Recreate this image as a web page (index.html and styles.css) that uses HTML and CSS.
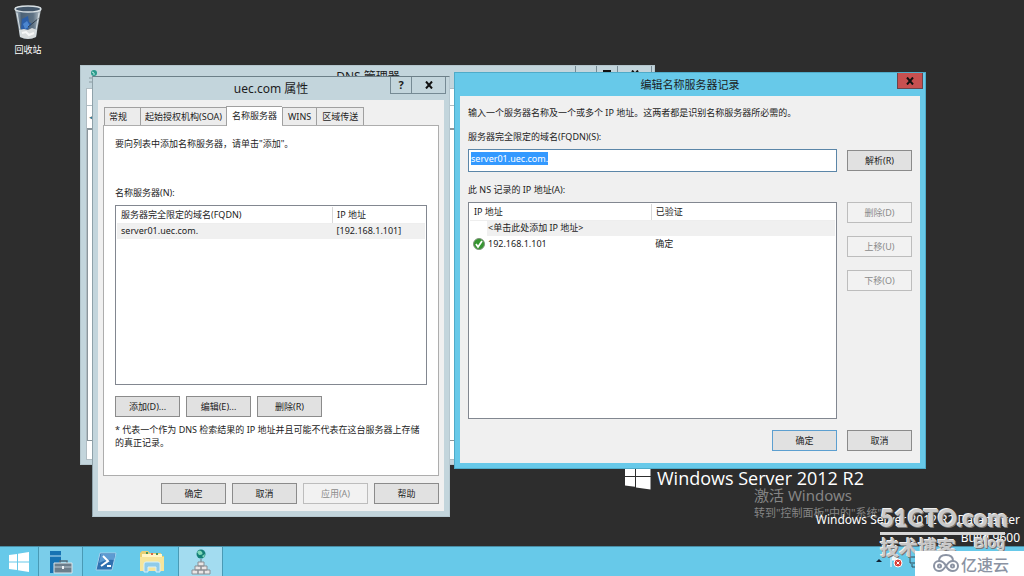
FILE: index.html
```html
<!DOCTYPE html>
<html lang="zh-CN">
<head>
<meta charset="utf-8">
<title>编辑名称服务器记录</title>
<link rel="stylesheet" href="styles.css">
</head>
<body>
<main class="desktop">
  <div class="desktop-icon">
    <svg width="30" height="36" viewBox="0 0 30 36" aria-hidden="true">
      <defs><linearGradient id="bin" x1="0" x2="1"><stop offset="0" stop-color="#b9c4ca"/><stop offset=".25" stop-color="#4c6277"/><stop offset=".7" stop-color="#5f7385"/><stop offset="1" stop-color="#c3ccd1"/></linearGradient></defs>
      <path d="M2 4L7 32Q15 36 23 32L28 4Z" fill="url(#bin)"/>
      <path d="M9 14l6-3 1 6 3 2-5 6-6-1z" fill="#2c5fa8"/><path d="M10 19l4-3 3 5-5 3z" fill="#4c86cf"/>
      <path d="M15 22L26 13" stroke="#33414e" stroke-width="1"/>
      <path d="M6 25l5-1 4 1 4-2 5 2-1 7q-8 4-16 0z" fill="#d9dcdd"/><path d="M9 28l4-1 3 3 5-2" stroke="#f7f7f7" stroke-width="2" fill="none"/>
      <ellipse cx="15" cy="4" rx="13" ry="3" fill="#44576a" stroke="#d8e0e4" stroke-width="1.5"/>
      <path d="M4 8l4 23M26 8l-4 23" stroke="#d8e0e4" stroke-width="1"/>
    </svg>
    <span>回收站</span>
  </div>

  <div class="brand">
    <svg width="26" height="26" viewBox="0 0 26 26" aria-hidden="true"><path d="M0 3.500L10 2.200V12H0ZM11 2L25.500 0V12H11ZM0 13H10V22.800L0 21.500ZM11 13H25.500V25.500L11 23.500Z" fill="#fff"/></svg>
    <span>Windows Server 2012 R2</span>
  </div>
  <div class="activate"><p class="activate-title">激活 Windows</p><p>转到"控制面板"中的"系统"</p></div>
  <div class="build"><p>Windows Server 2012 R2 Datacenter</p><p>Build 9600</p></div>

  <section class="window manager">
    <header class="manager-title">
      <svg width="14" height="14" viewBox="0 0 14 14" aria-hidden="true"><circle cx="7" cy="4" r="3" fill="#2a9a8c"/><path d="M5 3l2 1v2" stroke="#b9efe3" fill="none"/><path d="M2 9h10M7 7v5M2 13h10" stroke="#8a9aa0"/></svg>
      <h2>DNS 管理器</h2>
      <div class="caption-buttons"><button aria-label="最小化"></button><button aria-label="最大化"><svg width="8" height="8" viewBox="0 0 8 8"><path d="M1 1H7V7H1Z" fill="none" stroke="#111" stroke-width="2"/></svg></button><button class="wide" aria-label="关闭"><svg width="8" height="8" viewBox="0 0 8 8"><path d="M1 .5L7 7.500M7 .5L1 7.500" stroke="#111" stroke-width="2"/></svg></button></div>
    </header>
    <div class="manager-body">
      <div class="manager-menu"></div><div class="manager-tools"><span>◂</span></div>
      <div class="manager-view"><span>.]</span></div><div class="manager-status"></div>
    </div>
  </section>

  <section class="window properties">
    <header class="title"><h2>uec.com 属性</h2>
      <div class="caption-buttons"><button aria-label="帮助">?</button><button class="wide" aria-label="关闭"><svg width="8" height="8" viewBox="0 0 8 8"><path d="M1 .5L7 7.500M7 .5L1 7.500" stroke="#111" stroke-width="2"/></svg></button></div>
    </header>
    <div class="client">
      <div class="tabs" role="tablist">
        <button class="tab general" role="tab">常规</button><button class="tab" role="tab">起始授权机构(SOA)</button><button class="tab active" role="tab" aria-selected="true">名称服务器</button><button class="tab" role="tab">WINS</button><button class="tab" role="tab">区域传送</button>
      </div>
      <div class="panel">
        <p class="hint">要向列表中添加名称服务器，请单击"添加"。</p>
        <p id="servers-label">名称服务器(N):</p>
        <div class="list servers">
          <table aria-labelledby="servers-label">
            <thead><tr><th class="name">服务器完全限定的域名(FQDN)</th><th>IP 地址</th></tr></thead>
            <tbody><tr class="shade"><td>server01.uec.com.</td><td>[192.168.1.101]</td></tr></tbody>
          </table>
        </div>
        <div class="buttons"><button class="btn">添加(D)...</button><button class="btn">编辑(E)...</button><button class="btn">删除(R)</button></div>
        <p class="note">* 代表一个作为 DNS 检索结果的 IP 地址并且可能不代表在这台服务器上存储的真正记录。</p>
      </div>
      <div class="buttons end"><button class="btn">确定</button><button class="btn">取消</button><button class="btn" disabled>应用(A)</button><button class="btn">帮助</button></div>
    </div>
  </section>

  <section class="window edit">
    <header class="title"><h2>编辑名称服务器记录</h2>
      <button class="close" aria-label="关闭"><svg width="8" height="8" viewBox="0 0 8 8"><path d="M1 .5L7 7.500M7 .5L1 7.500" stroke="#111" stroke-width="2"/></svg></button>
    </header>
    <form class="client edit-form">
      <p class="intro">输入一个服务器名称及一个或多个 IP 地址。这两者都是识别名称服务器所必需的。</p>
      <label for="fqdn">服务器完全限定的域名(FQDN)(S):</label>
      <div class="form-row"><input id="fqdn" type="text" value="server01.uec.com." spellcheck="false"><button type="button" class="btn">解析(R)</button></div>
      <p class="ip-label" id="ip-label">此 NS 记录的 IP 地址(A):</p>
      <div class="form-row grow">
        <div class="list">
          <table aria-labelledby="ip-label">
            <colgroup><col class="state-col"><col class="ip-col"><col></colgroup>
            <thead><tr><th colspan="2">IP 地址</th><th>已验证</th></tr></thead>
            <tbody>
              <tr><td class="state"></td><td class="shade">&lt;单击此处添加 IP 地址&gt;</td><td class="shade"></td></tr>
              <tr><td class="state"><svg width="12" height="12" viewBox="0 0 12 12" role="img" aria-label="已验证"><circle cx="6" cy="6" r="5.500" fill="#35952f" stroke="#82947f"/><path d="M3 6l2 3 4-6" fill="none" stroke="#fff" stroke-width="1.800"/></svg></td><td>192.168.1.101</td><td>确定</td></tr>
            </tbody>
          </table>
        </div>
        <div class="side"><button type="button" class="btn" disabled>删除(D)</button><button type="button" class="btn" disabled>上移(U)</button><button type="button" class="btn" disabled>下移(O)</button></div>
      </div>
      <div class="buttons end"><button type="button" class="btn default">确定</button><button type="button" class="btn">取消</button></div>
    </form>
  </section>
</main>

<footer class="taskbar">
  <button class="task start" aria-label="开始"><svg width="20" height="20" viewBox="0 0 20 20"><path d="M0 3L8 2V9.500H0ZM9 1.800L20 0V9.500H9ZM0 10.500H8V18L0 17ZM9 10.500H20V20L9 18.200Z" fill="#fff"/></svg></button>
  <button class="task running" aria-label="服务器管理器"><svg width="24" height="24" viewBox="0 0 24 24"><path d="M1 1H12V23H1Z" fill="#1673b3"/><path d="M1 6H12" stroke="#b9e3f5"/><path d="M11 14V11H18V14" fill="none" stroke="#566b78" stroke-width="1.500"/><path d="M5 13H23V23H5Z" fill="#6c7e8b" stroke="#dce7ec"/><path d="M5 17H23" stroke="#b9c7d0"/><path d="M13 16h2v3h-2z" fill="#eef3f5"/></svg></button>
  <button class="task" aria-label="PowerShell"><svg width="22" height="19" viewBox="0 0 22 19"><path d="M5 1H21L17 18H1Z" fill="#2f70b0" stroke="#a4cfec"/><path d="M6 2H20L19 8Q11 7 4 11Z" fill="#5d9bd2"/><path d="M8 4L13 9L6 14M12 14H16" fill="none" stroke="#fff" stroke-width="2"/></svg></button>
  <button class="task" aria-label="文件资源管理器"><svg width="26" height="23" viewBox="0 0 26 23"><path d="M1 3L3 1H9L11 3H22V6H25V21H1Z" fill="#e8cf73"/><path d="M3 4H23V9H3Z" fill="#fff6c9"/><path d="M7 2h2v2H7zM17 3h2v2h-2z" fill="#46945b"/><path d="M12 3h2v2h-2z" fill="#d5664a"/><path d="M1 7H25V21H1Z" fill="#f6e59b"/><path d="M5 22V14Q5 12 7 12H19Q21 12 21 14V22H17V17H9V22Z" fill="#8fcbe9" stroke="#d7f0fa"/></svg></button>
  <button class="task current" aria-label="DNS 管理器"><svg width="20" height="26" viewBox="0 0 20 26"><circle cx="10" cy="5" r="4.500" fill="#147f76"/><path d="M6 3q3-3 5 0t-3 3zM11 7l3-2-1 4z" fill="#80d8b9"/><path d="M10 10v4" fill="none" stroke="#64777f"/><path d="M7 13h6v4H7zM4 17h6v4H4zM10 17h6v4h-6zM1 21h6v4H1zM7 21h6v4H7zM13 21h6v4h-6z" fill="#e9e5e5" stroke="#8b8e93"/></svg></button>
  <div class="tray"><svg width="42" height="16" viewBox="0 0 42 16" aria-hidden="true"><path d="M0 9l3-3 3 3z" fill="#123"/><path d="M15 2v12M16 3h5l1 4h-6" fill="#edf8fc" stroke="#fff"/><circle cx="22" cy="10" r="4" fill="#d83b32" stroke="#fff"/><path d="M20.500 8.500l3 3m0-3l-3 3" stroke="#fff"/><path d="M34 4h6v6h-6zM36 11v3h5" fill="none" stroke="#35515d"/></svg></div>
</footer>

<aside class="cto">
  <div class="cto-name">51CTO.com</div>
  <div class="cto-sub"><span>技术博客</span><span class="blog">Blog</span></div>
</aside>
<aside class="yisu"><svg width="26" height="19" viewBox="0 0 26 19" aria-hidden="true"><g fill="none" stroke="#8b93a3" stroke-width="2"><path d="M6 7C6 3 9 1 13 1S20 3 20 7"/><path d="M13 12C11 8 9 7 6 7a5 5 0 0 0 0 10c3 0 4-1 7-5s4-5 7-5a5 5 0 0 1 0 10c-3 0-5-1-7-5"/><circle cx="6.500" cy="12" r="1.500"/><circle cx="19.500" cy="12" r="1.500"/></g></svg><span>亿速云</span></aside>
<script src="script.js"></script>
</body>
</html>
```
FILE: styles.css
```css
* { box-sizing: border-box; }
body { margin: 0; height: 100vh; display: flex; flex-direction: column; overflow: hidden; position: relative; background: #2d2d2d; color: #1c1c1c; font: 9px/13px "Noto Sans", "Noto Sans CJK SC", sans-serif; }
p, h2 { margin: 0; font-weight: 400; }
button, input { font: inherit; color: inherit; margin: 0; padding: 0; border-radius: 0; }
svg { display: block; flex: none; }
.desktop { flex: 1; position: relative; }
.desktop-icon { width: 56px; padding-top: 5px; display: flex; flex-direction: column; align-items: center; gap: 2px; color: #fff; }
.window { position: absolute; display: flex; flex-direction: column; background: #c3d5dc; }
.manager { left: 80px; top: 65px; width: 575px; height: 400px; padding: 0 5px 4px; border: 1px solid #b3c5cc; }
.manager-title { height: 22px; flex: none; display: flex; align-items: flex-start; margin-right: -3px; }
.manager-title > svg { margin: 3px 0 0 1px; }
.manager-title h2 { flex: 1; text-align: center; padding-left: 60px; font-size: 12px; line-height: 21px; }
.caption-buttons { display: flex; }
.caption-buttons button { width: 21px; height: 17px; border: 1px solid #768a94; border-top: 0; border-right: 0; background: transparent; font-weight: 700; font-size: 11px; line-height: 14px; display: flex; align-items: center; justify-content: center; }
.caption-buttons .wide { width: 35px; border-right: 1px solid #768a94; }
.manager-body { flex: 1; display: flex; flex-direction: column; border: 1px solid #b0bcc2; background: #fff; }
.manager-menu { height: 17px; border-bottom: 1px solid #b0bcc2; }
.manager-tools { height: 23px; border-bottom: 1px solid #8b969c; color: #2f7f9b; padding: 4px 2px; }
.manager-view { flex: 1; border: 1px solid #8b969c; text-align: right; padding: 18px 198px 0 0; color: #102040; }
.manager-status { height: 18px; }

.properties { left: 92px; top: 76px; width: 358px; height: 441px; border: 1px solid #8fa2aa; border-top-color: #6c7f88; border-right-color: #b6c8d0; border-bottom-color: #b6c8d0; padding: 0 5px 5px; }
.title { height: 23px; flex: none; position: relative; }
.title h2 { text-align: center; font-size: 12px; line-height: 23px; }
.title .caption-buttons { position: absolute; right: -2px; top: 0; }
.client { flex: 1; background: #f0f0f0; display: flex; flex-direction: column; padding: 6px 5px 7px; }
.tabs { display: flex; align-items: flex-end; padding-left: 1px; }
.tab { height: 18px; padding: 0 4px; border: 1px solid #a0a0a0; border-bottom: 0; border-right: 0; background: #ececec; white-space: nowrap; }
.tab:last-child { border-right: 1px solid #a0a0a0; }
.tab.general { width: 36px; text-align: left; }
.tab.active { height: 20px; margin-bottom: -1px; padding: 0 5px 2px; background: #fff; position: relative; }
.tab.active ~ .tab { padding: 0 5px; }
.panel { flex: 1; background: #fff; border: 1px solid #adadad; padding: 11px 11px 0; margin-bottom: 7px; }
.hint { margin-bottom: 36px; }
.list { background: #fff; border: 1px solid #828790; padding: 1px; }
.servers { height: 180px; margin: 6px 0 11px; }
table { width: 100%; border-collapse: collapse; table-layout: fixed; }
th, td { height: 16px; padding: 0 4px; text-align: left; font-weight: 400; line-height: 14px; white-space: nowrap; }
th { border-bottom: 1px solid #eee; }
th + th { border-left: 1px solid #d8d8d8; }
.name { width: 70%; }
.shade { background: #f0f0f0; }
.buttons { display: flex; gap: 6px; }
.end { justify-content: flex-end; }
.btn { width: 65px; height: 21px; flex: none; border: 1px solid #8b8b8b; background: #e1e1e1; line-height: 17px; }
.btn:disabled { color: #8b8b8b; background: #f2f2f2; border-color: #bdbdbd; }
.note { margin-top: 6px; }

.edit { left: 454px; top: 72px; width: 472px; height: 397px; padding: 0 5px 5px; background: #67c9e9; border: 1px solid #4eabc9; }
.edit .title h2 { font-size: 11px; }
.close { position: absolute; right: -3px; top: 0; width: 26px; height: 16px; border: 1px solid #6d4349; border-top: 0; background: #c75050; display: flex; align-items: center; justify-content: center; }
.edit-form { padding: 10px 8px 12px; }
.intro { margin-bottom: 11px; }
.edit-form label { margin-bottom: 6px; }
.form-row { display: flex; align-items: center; gap: 10px; }
.form-row input { flex: 1; min-width: 0; height: 23px; border: 1px solid #5b86a8; background: #fff; padding: 1px 2px 6px; outline: 0; }
.form-row input::selection { background: #3399ff; color: #fff; }
.ip-label { margin: 11px 0 6px; }
.grow { flex: 1; align-items: stretch; margin-bottom: 11px; }
.grow .list { flex: 1; }
.side { display: flex; flex-direction: column; gap: 13px; }
.state-col { width: 17px; }
.ip-col { width: 45%; }
.state { padding: 0 3px; }
tbody .state + td { padding-left: 1px; }
.edit-form .buttons { gap: 10px; }
.default { border-color: #5c9fd0; }

.brand { position: absolute; left: 625px; top: 464px; display: flex; gap: 6px; color: #fff; font: 400 18px/28px "Open Sans", "Noto Sans", sans-serif; white-space: nowrap; }
.activate { position: absolute; left: 754px; top: 485px; color: #858585; font-size: 11px; line-height: 16px; white-space: nowrap; }
.activate-title { font-size: 15px; line-height: 20px; }
.build { position: absolute; right: 4px; top: 511px; color: #fff; text-align: right; font-size: 12px; line-height: 18px; white-space: nowrap; }
.taskbar { height: 30px; display: flex; background: #67c9e9; border-top: 1px solid #498da5; }
.task { width: 46px; border: 0; background: transparent; display: flex; align-items: center; justify-content: center; }
.task.start { width: 38px; }
.task.running { width: 45px; background: #7acdea; border: solid #4a9ab5; border-width: 0 1px; }
.task.current { width: 45px; margin-left: 3px; background: #a3dcf0; border: solid #4a9ab5; border-width: 0 1px; }
.tray { margin-left: auto; padding: 6px 106px 0 0; }
.cto { position: absolute; right: 19px; bottom: 17px; width: 125px; color: #c9c9c9; text-shadow: 1px 1px 0 #777, -1px -1px 0 #eee; }
.cto-name { font: 900 24px/28px Lato, "Liberation Sans", sans-serif; border-bottom: 3px solid #d6d6d6; white-space: nowrap; }
.cto-sub { display: flex; justify-content: space-between; font: 700 19px/24px "Noto Sans CJK SC", sans-serif; }
.blog { font: 700 14px/16px "Liberation Sans", sans-serif; }
.yisu { position: absolute; right: 0; bottom: 0; width: 109px; height: 25px; padding-left: 18px; background: #fff; color: #8b93a3; display: flex; align-items: center; gap: 2px; font: 500 16px/24px "Noto Sans CJK SC", sans-serif; }
```
FILE: script.js
```js
const nameField = document.getElementById("fqdn");
nameField.focus();
nameField.select();
```
